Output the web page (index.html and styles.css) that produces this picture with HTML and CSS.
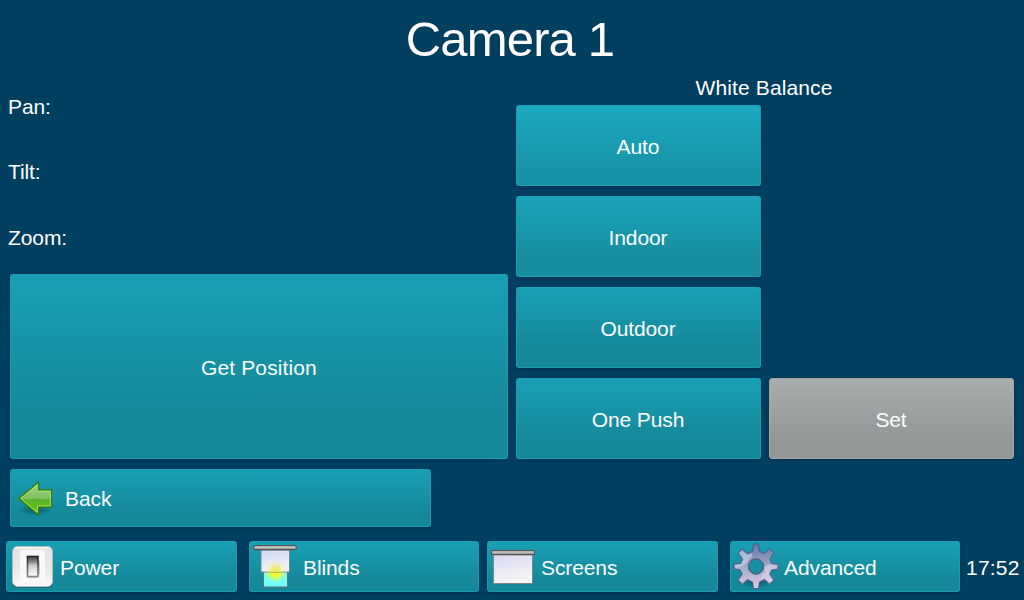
FILE: index.html
```html
<!DOCTYPE html>
<html lang="en">
<head>
<meta charset="utf-8">
<title>Camera 1</title>
<link rel="stylesheet" href="styles.css">
</head>
<body>
<div class="panel">
  <h1 class="title">Camera 1</h1>
  <main class="controls">
    <section class="position">
      <div class="reading">Pan:</div>
      <div class="reading">Tilt:</div>
      <div class="reading">Zoom:</div>
      <button class="btn get-position">Get Position</button>
    </section>
    <section class="balance">
      <h2 class="balance-title">White Balance</h2>
      <button class="btn auto">Auto</button>
      <button class="btn indoor">Indoor</button>
      <button class="btn outdoor">Outdoor</button>
      <button class="btn one-push">One Push</button>
      <button class="btn set" disabled>Set</button>
    </section>
  </main>
  <button class="btn with-icon back">
    <svg class="back-icon" width="40" height="40" viewBox="0 0 40 40">
      <defs>
        <linearGradient id="leaf" x1="0" y1="0" x2="0" y2="1"><stop offset="0" stop-color="#a2cf91"/><stop offset=".5" stop-color="#5cae32"/><stop offset="1" stop-color="#60d000"/></linearGradient>
        <radialGradient id="shade"><stop offset="0" stop-color="#063e46" stop-opacity=".6"/><stop offset="1" stop-color="#063e46" stop-opacity="0"/></radialGradient>
      </defs>
      <ellipse cx="20" cy="31" rx="17" ry="6" fill="url(#shade)"/>
      <path d="M3.800 19.500 23.500 3V11H36.500V28H23.500V36Z" fill="url(#leaf)" stroke="#357d0a" stroke-width="1.400"/>
      <path d="M5 19.500 22.500 5.500V12H35.500V19.500C28 22.500 22 17.500 14 20.500Z" fill="#b4db9a" opacity=".4"/>
      <path d="M5.700 19.500 22.400 5.700V12.100H35.400V26.900H22.400V33.300Z" fill="none" stroke="#a9dc70" stroke-width="1"/>
    </svg>
    <span>Back</span>
  </button>
  <nav class="bar">
    <button class="btn with-icon power">
      <svg class="bar-icon" width="48" height="50" viewBox="0 0 48 50">
        <defs>
          <linearGradient id="plate" x1="0" y1="0" x2="0" y2="1"><stop offset="0" stop-color="#fff"/><stop offset=".08" stop-color="#e3e3e3"/><stop offset=".6" stop-color="#e9e9e9"/><stop offset="1" stop-color="#fafafa"/></linearGradient>
          <linearGradient id="rocker" x1="0" y1="0" x2="0" y2="1"><stop offset="0" stop-color="#4d4d4d"/><stop offset=".22" stop-color="#777"/><stop offset=".45" stop-color="#ccc"/><stop offset="1" stop-color="#fff"/></linearGradient>
          <linearGradient id="rim" x1="0" y1="0" x2="0" y2="1"><stop offset="0" stop-color="#222"/><stop offset="1" stop-color="#888"/></linearGradient>
        </defs>
        <rect x="6" y="6.500" width="41" height="40.500" rx="5" fill="#07505c" opacity=".5"/>
        <rect x="6.500" y="5.500" width="40" height="40" rx="5" fill="url(#plate)" stroke="#bdbdb9" stroke-width=".8"/>
        <rect x="14" y="9" width="25" height="35" rx="3" fill="#f8f8f8"/>
        <path d="M31 17 34 20V33L31 37H22V35H31Z" fill="#c9c9c9"/>
        <rect x="21.500" y="15.500" width="10.500" height="20" fill="url(#rocker)" stroke="url(#rim)" stroke-width="1.600"/>
      </svg>
      <span>Power</span>
    </button>
    <button class="btn with-icon blinds">
      <svg class="bar-icon" width="48" height="50" viewBox="0 0 48 50">
        <defs>
          <radialGradient id="sun"><stop offset="0" stop-color="#ffed00"/><stop offset=".45" stop-color="#efff35"/><stop offset="1" stop-color="#72fffa"/></radialGradient>
          <linearGradient id="cloth" x1="0" y1="0" x2=".2" y2="1"><stop offset="0" stop-color="#d2d8f2"/><stop offset="1" stop-color="#eff4f5"/></linearGradient>
          <linearGradient id="rod" x1="0" y1="0" x2="0" y2="1"><stop offset="0" stop-color="#eee"/><stop offset="1" stop-color="#858585"/></linearGradient>
          <clipPath id="window"><rect x="15" y="30" width="23.500" height="15.500"/></clipPath>
          <clipPath id="veil"><rect x="12" y="9" width="28" height="22"/></clipPath>
          <radialGradient id="halo"><stop offset="0" stop-color="#eee93d"/><stop offset=".4" stop-color="#f0ec70" stop-opacity=".8"/><stop offset="1" stop-color="#f6f5ca" stop-opacity="0"/></radialGradient>
        </defs>
        <rect x="14.500" y="30.500" width="24" height="15.500" fill="#72fffa" stroke="#687374"/>
        <ellipse cx="26.500" cy="30" rx="11.500" ry="11.500" fill="url(#sun)" clip-path="url(#window)"/>
        <path d="M12 9H40.500V31H12Z" fill="url(#cloth)" stroke="#73858c"/>
        <circle cx="26.500" cy="30" r="11.500" fill="url(#halo)" clip-path="url(#veil)"/>
        <rect x="4.800" y="4.700" width="42.500" height="4" rx="1.500" fill="url(#rod)" stroke="#555" stroke-width="1.200"/>
      </svg>
      <span>Blinds</span>
    </button>
    <button class="btn with-icon screens">
      <svg class="bar-icon" width="48" height="50" viewBox="0 0 48 50">
        <defs>
          <linearGradient id="sheet" x1="0" y1="0" x2=".25" y2="1"><stop offset="0" stop-color="#d6d7f1"/><stop offset="1" stop-color="#f5f5f5"/></linearGradient>
        </defs>
        <rect x="6.500" y="11" width="39" height="31.500" fill="url(#sheet)" stroke="#7e8685"/>
        <path d="M7 14.500H45" stroke="#b2b3b3"/>
        <rect x="4.500" y="9.700" width="43" height="3.800" rx="1" fill="url(#rod)" stroke="#555" stroke-width="1.200"/>
      </svg>
      <span>Screens</span>
    </button>
    <button class="btn with-icon advanced">
      <svg class="bar-icon" width="48" height="50" viewBox="0 0 48 50">
        <defs>
          <linearGradient id="steel" x1="0" y1="0" x2="0" y2="1"><stop offset="0" stop-color="#6078a8"/><stop offset=".5" stop-color="#a2a8c6"/><stop offset="1" stop-color="#dcc9e5"/></linearGradient>
        </defs>
        <ellipse cx="26" cy="41" rx="19" ry="6" fill="url(#shade)"/>
        <path fill-rule="evenodd" fill="url(#steel)" stroke="#4e5377" stroke-width=".9" d="M23.500 3H28.500L29.500 10.500 34.500 12.500 39.500 7.800 43.800 12 39.700 18 41.700 22.500 48 23V28L41.700 29 39.700 33 43.800 39 39.500 43 34.500 38.500 29.500 41 28.500 47.500H23.500L22.500 41 17.500 38.500 12.500 43 8.200 39 12.300 33 10.300 29 4 28V23L10.300 22.500 12.300 18 8.200 12 12.500 7.800 17.500 12.500 22.500 10.500ZM26 18A7.500 7.500 0 1 0 26 33A7.500 7.500 0 1 0 26 18Z"/>
        <path d="M9 12 12 9.500 17.500 14 21.500 12 22.500 15 20 17.500 18 20.500 14 24 11 26 5 27V24L11.500 23 13.500 18Z" fill="#c3d2e4" opacity=".7"/>
        <path d="M41 23.500 47 24.500V27.500L41 28.500 38.500 34 42.500 39.500 40.500 41.500 34.500 37.500 31 39 32 34 36 31 34 27 37 24Z" fill="#dad2e8" opacity=".65"/>
        <circle cx="26" cy="25.500" r="7.500" fill="none" stroke="#4f6683" stroke-width="1.300"/>
      </svg>
      <span>Advanced</span>
    </button>
    <time class="clock">17:52</time>
  </nav>
</div>
</body>
</html>
```
FILE: styles.css
```css
* { box-sizing: border-box; }
body {
  margin: 0;
  background: #003f5f;
  color: #fff;
  font: 21px/24px "Liberation Sans", Arial, sans-serif;
  letter-spacing: -.1px;
}
.panel {
  width: 1024px;
  height: 600px;
  overflow: hidden;
  display: flex;
  flex-direction: column;
}
.title {
  margin: 0;
  height: 76px;
  padding-right: 4px;
  font-size: 49px;
  font-weight: 400;
  line-height: 79px;
  letter-spacing: -.85px;
  text-align: center;
}
.controls {
  height: 383px;
  padding: 0 10px;
  display: grid;
  grid-template-columns: 498px 498px;
  column-gap: 8px;
}
.position {
  padding-top: 19px;
  display: flex;
  flex-direction: column;
}
.reading {
  height: 65.400px;
  margin-left: -2px;
}
.get-position {
  margin-top: -17.200px;
  height: 185px;
}
.balance {
  display: grid;
  grid-template-columns: 245px 245px;
  grid-template-rows: 19px repeat(4, 81px);
  gap: 10px 8px;
}
.balance-title {
  grid-column: 1 / 3;
  margin: 0;
  padding-right: 2px;
  font-size: inherit;
  font-weight: 400;
  letter-spacing: .12px;
  text-align: center;
}
.auto, .indoor, .outdoor, .one-push { grid-column: 1; }
.btn {
  display: flex;
  align-items: center;
  justify-content: center;
  border: 1px solid #189cae;
  border-top-color: #18a2b8;
  border-radius: 3px;
  padding: 2px 1px 0 0;
  background: linear-gradient(#199fb4, #15899a 76%, #15899a);
  box-shadow: 0 1px 3px #00304a;
  color: inherit;
  font: inherit;
  letter-spacing: inherit;
}
.position .get-position {
  padding: 3px 0 0;
  letter-spacing: .12px;
}
.balance .auto { background: linear-gradient(#1ba9c0, #1894a8 76%, #1893a6); }
.balance .indoor { background: linear-gradient(#1aa3b9, #168e9f 76%, #168e9f); }
.balance .set {
  grid-column: 2;
  background: linear-gradient(#a8aeae, #929897 76%, #929897);
  border-color: #a1a7a7;
}
.with-icon {
  justify-content: flex-start;
  padding: 0;
}
.back {
  width: 421px;
  height: 58px;
  margin: 10px 0 0 10px;
  padding: 1px 0 0 4px;
}
.back-icon { margin-right: 10px; }
.bar {
  height: 51px;
  margin: 14px 0 0 6px;
  display: flex;
}
.bar .btn { padding-top: 3px; }
.bar-icon {
  flex: none;
  margin: -5px 6px 0 -1px;
}
.power { width: 231px; }
.blinds { width: 230px; margin-left: 12px; }
.screens { width: 231px; margin-left: 8px; }
.advanced { width: 230px; margin-left: 12px; }
.clock {
  margin-left: 6px;
  line-height: 53px;
  letter-spacing: .2px;
}
```
